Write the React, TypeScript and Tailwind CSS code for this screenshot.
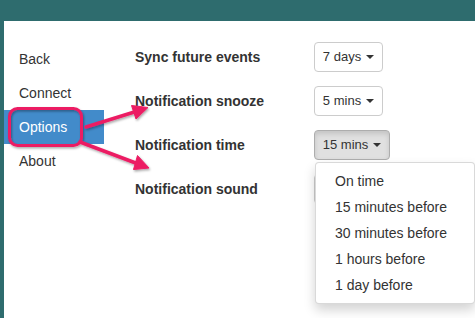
import React from "react";

const font = { fontFamily: '"Liberation Sans", Arial, Helvetica, sans-serif' };

function Caret() {
  return (
    <span className="ml-[5px] inline-block h-0 w-0 border-x-[4px] border-t-[4px] border-x-transparent border-t-[#333]" />
  );
}

function SelectButton({ label, width, active }: { label: string; width: string; active?: boolean }) {
  return (
    <div
      className={
        "flex h-[30px] items-center justify-center rounded-[4px] border text-[13px] text-[#333] " +
        width +
        (active
          ? " border-[#adadad] bg-[#e0e0e0] shadow-[inset_0_3px_5px_rgba(0,0,0,0.125)]"
          : " border-[#ccc] bg-white")
      }
    >
      {label ? <span>{label}</span> : null}
      <Caret />
    </div>
  );
}

const navItems = ["Back", "Connect", "Options", "About"];
const menuItems = ["On time", "15 minutes before", "30 minutes before", "1 hours before", "1 day before"];

export default function App() {
  return (
    <div className="relative h-[318px] w-[475px] overflow-hidden bg-[#2e6c6e] pl-[4px] pt-[21px]" style={font}>
      <div className="flex h-full w-full bg-white pt-[21px]">
        <div className="flex w-[100px] flex-col">
          {navItems.map((n) => (
            <div
              key={n}
              className={
                "flex h-[34px] items-center pl-[15px] text-[14px] " +
                (n === "Options" ? "bg-[#428bca] text-white" : "text-[#333]")
              }
            >
              {n}
            </div>
          ))}
        </div>
        <div className="ml-[31px] flex flex-col gap-[14px]">
          <div className="flex h-[30px] items-center">
            <div className="w-[179px] text-[14px] font-bold text-[#333]">Sync future events</div>
            <SelectButton label="7 days" width="w-[69px]" />
          </div>
          <div className="flex h-[30px] items-center">
            <div className="w-[179px] text-[14px] font-bold text-[#333]">Notification snooze</div>
            <SelectButton label="5 mins" width="w-[69px]" />
          </div>
          <div className="flex h-[30px] items-center">
            <div className="w-[179px] text-[14px] font-bold text-[#333]">Notification time</div>
            <div className="relative">
              <SelectButton label="15 mins" width="w-[76px]" active />
              <div className="absolute left-[1px] top-[32px] z-20 w-[160px] rounded-[4px] border border-[rgba(0,0,0,0.15)] bg-white py-[5px] shadow-[0_6px_12px_rgba(0,0,0,0.175)]">
                {menuItems.map((m) => (
                  <div key={m} className="flex h-[26px] items-center whitespace-nowrap px-[19px] text-[14px] text-[#333]">
                    {m}
                  </div>
                ))}
              </div>
            </div>
          </div>
          <div className="flex h-[30px] items-center">
            <div className="w-[179px] text-[14px] font-bold text-[#333]">Notification sound</div>
            <SelectButton label="" width="w-[76px]" />
          </div>
        </div>
      </div>
      <svg
        className="pointer-events-none absolute left-0 top-0 z-30"
        width="475"
        height="318"
        viewBox="0 0 475 318"
      >
        <defs>
          <filter id="sh" x="-20%" y="-20%" width="140%" height="140%">
            <feDropShadow dx="1" dy="1.5" stdDeviation="1" floodColor="#000" floodOpacity="0.35" />
          </filter>
        </defs>
        <g filter="url(#sh)" fill="#ec1c64" stroke="#ec1c64">
          <rect x="9.5" y="108.5" width="72" height="37" rx="8" fill="none" strokeWidth="3" />
          <line x1="86" y1="127" x2="136" y2="111.5" strokeWidth="3.5" strokeLinecap="round" />
          <polygon points="148,107.5 131.5,105.5 136,119" strokeWidth="1" strokeLinejoin="round" />
          <line x1="80" y1="142" x2="137" y2="163.5" strokeWidth="3.5" strokeLinecap="round" />
          <polygon points="149,168 137.5,155.5 133.5,169.5" strokeWidth="1" strokeLinejoin="round" />
        </g>
      </svg>
    </div>
  );
}
